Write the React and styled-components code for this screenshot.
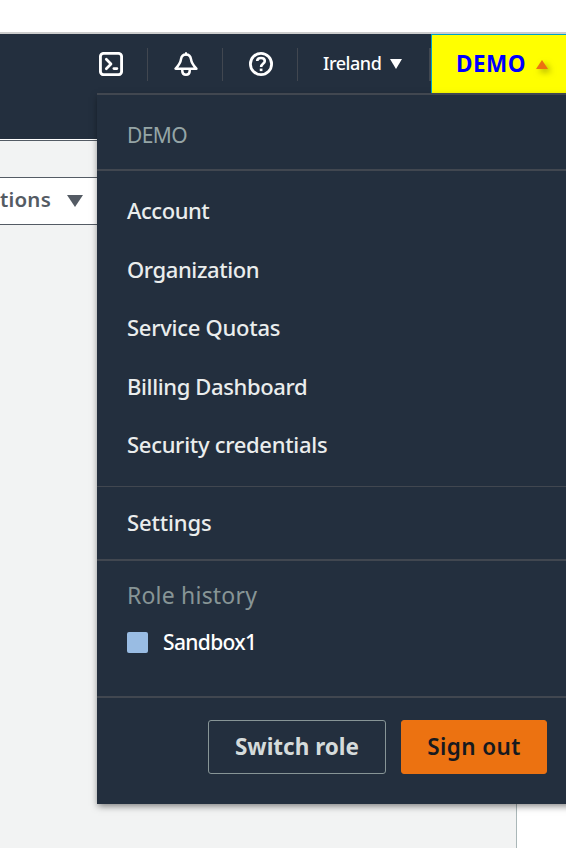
import React from 'react';
import styled, { createGlobalStyle } from 'styled-components';

const GlobalStyle = createGlobalStyle`
  *, *::before, *::after { box-sizing: border-box; }
  html, body { margin: 0; background: #fff; overflow: hidden; }
  body { font-family: "Noto Sans", "Open Sans", sans-serif; }
  button { font-family: inherit; margin: 0; }
`;

const Page = styled.div`
  width: 566px;
  height: 848px;
  padding-top: 32px;
  display: flex;
  flex-direction: column;
  overflow: hidden;
  background: #fff;
`;

const Header = styled.header`
  position: relative;
  flex: none;
  height: 107px;
  background: #232f3e;
  border-top: 2px solid #ccc;
`;

const NavBar = styled.nav`
  height: 59px;
  padding-left: 99px;
  display: flex;
`;

const IconButton = styled.button`
  flex: none;
  width: ${(p) => p.$width}px;
  height: 59px;
  padding: 0 0 0 ${(p) => p.$inset || 0}px;
  border: 0;
  background: none;
  display: flex;
  align-items: center;
  color: #fff;
`;

const Divider = styled.span`
  flex: none;
  align-self: flex-start;
  width: ${(p) => p.$width || 1}px;
  height: 33px;
  margin-top: 14px;
  background: #414750;
`;

const Label = styled.span`
  white-space: nowrap;
  letter-spacing: ${(p) => p.$spacing || 0}px;
`;

const RegionButton = styled.button`
  flex: none;
  width: 131px;
  height: 59px;
  padding: 0 0 1px 25px;
  border: 0;
  background: none;
  display: flex;
  align-items: center;
  gap: 9px;
  color: #fff;
  font-size: 18px;
  font-weight: 500;
`;

const AccountButton = styled.button`
  flex: 1;
  height: 59px;
  padding: 0 0 2px 24px;
  border: 1px solid #00a1c9;
  border-width: 1px 0 0 1px;
  background: #ff0;
  display: flex;
  align-items: center;
  gap: 10px;
  color: #00f;
  font-size: 22.5px;
  font-weight: 700;
`;

const Caret = styled.svg`
  flex: none;
  display: block;
  overflow: visible;
  margin-top: ${(p) => p.$drop || 0}px;
  filter: ${(p) => (p.$shadow ? 'drop-shadow(3px 3px 3px rgba(90, 90, 0, 0.5))' : 'none')};
`;

const Menu = styled.div`
  position: absolute;
  z-index: 2;
  top: 59px;
  left: 97px;
  width: 480px;
  height: 711px;
  border-top: 2px solid #414750;
  background: #232f3e;
  box-shadow: 0 3px 7px -1px rgba(0, 0, 0, 0.5);
`;

const Section = styled.section`
  width: 469px;
  height: ${(p) => p.$height}px;
  padding: ${(p) => p.$top || 0}px 0 0 30px;
  border-bottom: ${(p) => p.$rule || 2}px solid #414750;
  display: flex;
  flex-direction: column;
`;

const AccountName = styled.div`
  height: 40px;
  line-height: 40px;
  font-size: 21px;
  color: #95a5a6;
`;

const MenuItem = styled.a`
  height: ${(p) => p.$height || 58.5}px;
  display: flex;
  align-items: center;
  color: #eaeded;
  font-size: 22px;
  font-weight: 500;
`;

const SectionTitle = styled.div`
  height: 40px;
  line-height: 40px;
  font-size: 23px;
  color: #879596;
`;

const RoleRow = styled.div`
  height: 46px;
  margin-top: 4px;
  display: flex;
  align-items: center;
  gap: 15px;
  color: #fff;
  font-size: 21px;
  font-weight: 500;
`;

const Swatch = styled.span`
  width: 21px;
  height: 21px;
  margin-top: 1px;
  border-radius: 2px;
  background: #99bce3;
`;

const Actions = styled.footer`
  width: 469px;
  padding: 22px 19px 0 0;
  display: flex;
  justify-content: flex-end;
  gap: 15px;
`;

const ActionButton = styled.button`
  width: ${(p) => p.$width}px;
  height: 54px;
  padding: 0 0 1px;
  border: 1px solid ${(p) => (p.$primary ? '#ec7211' : '#879596')};
  border-radius: 3px;
  background: ${(p) => (p.$primary ? '#ec7211' : 'transparent')};
  color: ${(p) => (p.$primary ? '#16191f' : '#d5dbdb')};
  font-size: 22.5px;
  font-weight: ${(p) => (p.$primary ? 600 : 700)};
`;

const Body = styled.main`
  flex: 1;
  display: flex;
  flex-direction: column;
  margin-top: 1px;
  border-top: 1px solid #545b64;
`;

const Content = styled.div`
  flex: 1;
  width: 517px;
  padding-top: 36px;
  border-right: 1px solid #aab7b8;
  background: #f2f3f3;
`;

const ActionsDropdown = styled.button`
  width: 300px;
  height: 48px;
  padding: 0 0 4px;
  border: 1px solid #545b64;
  border-width: 1px 0;
  background: #fff;
  display: flex;
  align-items: center;
  gap: 16px;
  color: #545b64;
  font-size: 20.5px;
  font-weight: 600;
`;

const MENU_ITEMS = [
  ['Account', -0.45],
  ['Organization', -0.4],
  ['Service Quotas', -0.27],
  ['Billing Dashboard', -0.37],
  ['Security credentials', -0.3],
];

const CloudShellIcon = () => (
  <svg width="24" height="24" viewBox="0 0 24 24" fill="none" stroke="currentColor" strokeWidth="2.9" strokeLinecap="round" strokeLinejoin="round">
    <rect x="1.4" y="1.4" width="21.2" height="21.2" rx="3.2" />
    <path d="M7.3 7.3 12 12l-4.7 4.7" strokeWidth="2.7" />
    <path d="M14.9 16.6h3" strokeWidth="2.7" />
  </svg>
);

const BellIcon = () => (
  <svg width="24" height="24" viewBox="0 0 24 24" fill="none" stroke="currentColor" strokeWidth="2.5" strokeLinejoin="round">
    <path d="M12 2.4c-2.8 0-4.6 2-5 4.8-.5 4.4-2.5 6.4-5.4 9.5h20.8c-2.9-3.1-4.9-5.1-5.4-9.5-.4-2.8-2.2-4.8-5-4.8Z" />
    <path d="M12 1v1.8" strokeLinecap="round" strokeWidth="2" />
    <path d="M8.3 17.5v1.5c0 2.2 1.5 3.7 3.7 3.7s3.7-1.5 3.7-3.7v-1.5" strokeWidth="2.5" />
  </svg>
);

const HelpIcon = () => (
  <svg width="24" height="24" viewBox="0 0 24 24" fill="none" stroke="currentColor" strokeWidth="2.8">
    <circle cx="12" cy="12" r="10.6" />
    <path d="M8.2 9.1c0-2 1.5-3.1 3.8-3.1s3.8 1.1 3.8 3c0 2.7-3.7 2.8-3.7 5.9" strokeWidth="2.6" />
    <path d="M12.1 16.6v2.5" strokeWidth="2.7" />
  </svg>
);

export default function App() {
  return (
    <>
      <GlobalStyle />
      <Page>
        <Header>
          <NavBar>
            <IconButton $width={48} aria-label="CloudShell"><CloudShellIcon /></IconButton>
            <Divider />
            <IconButton $width={74} $inset={26} aria-label="Notifications"><BellIcon /></IconButton>
            <Divider />
            <IconButton $width={74} $inset={26} aria-label="Help"><HelpIcon /></IconButton>
            <Divider />
            <RegionButton>
              <Label $spacing={-0.45}>Ireland</Label>
              <Caret width="12" height="10" viewBox="0 0 12 10" $drop={2}>
                <path d="M0 0h12L6 10Z" fill="#fff" />
              </Caret>
            </RegionButton>
            <Divider $width={2} />
            <AccountButton>
              <Label $spacing={0.5}>DEMO</Label>
              <Caret width="12" height="9" viewBox="0 0 12 9" $drop={2} $shadow>
                <path d="M6 0 12 9H0Z" fill="#ec7211" />
              </Caret>
            </AccountButton>
          </NavBar>
          <Menu>
            <Section $height={76} $top={20}>
              <AccountName><Label $spacing={-0.6}>DEMO</Label></AccountName>
            </Section>
            <Section $height={316} $top={10} $rule={1}>
              {MENU_ITEMS.map(([name, spacing]) => (
                <MenuItem key={name}><Label $spacing={spacing}>{name}</Label></MenuItem>
              ))}
            </Section>
            <Section $height={74}>
              <MenuItem $height={70}><Label $spacing={-0.15}>Settings</Label></MenuItem>
            </Section>
            <Section $height={137} $top={14}>
              <SectionTitle><Label $spacing={0.2}>Role history</Label></SectionTitle>
              <RoleRow>
                <Swatch />
                <Label $spacing={-0.65}>Sandbox1</Label>
              </RoleRow>
            </Section>
            <Actions>
              <ActionButton $width={178}><Label $spacing={0}>Switch role</Label></ActionButton>
              <ActionButton $width={146} $primary><Label $spacing={0.4}>Sign out</Label></ActionButton>
            </Actions>
          </Menu>
        </Header>
        <Body>
          <Content>
            <ActionsDropdown>
              <Label $spacing={0.2}>tions</Label>
              <Caret width="16" height="12" viewBox="0 0 16 12" $drop={4}>
                <path d="M0 0h16L8 12Z" fill="#545b64" />
              </Caret>
            </ActionsDropdown>
          </Content>
        </Body>
      </Page>
    </>
  );
}
